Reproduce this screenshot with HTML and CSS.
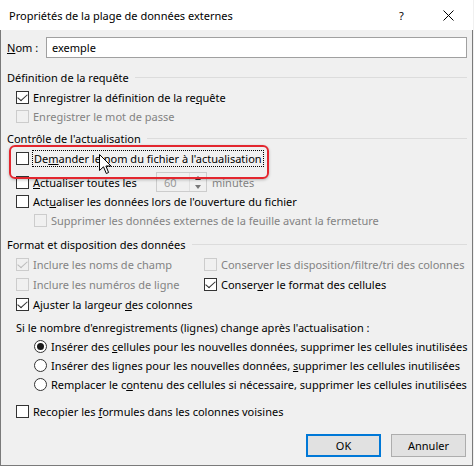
FILE: index.html
```html
<!DOCTYPE html>
<html lang="fr">
<head>
    <meta charset="UTF-8">
    <title>Propriétés de la plage de données externes</title>
    <link rel="stylesheet" href="styles.css">
</head>
<body>
    <div class="dialog">
        <div class="titlebar">
            <span class="title">Propriétés de la plage de données externes</span>
            <span class="help">?</span>
            <svg class="close" width="11" height="11" viewBox="0 0 11 11">
                <path d="M0.5 0.5 L10.5 10.5 M10.5 0.5 L0.5 10.5" stroke="#000" stroke-width="1" fill="none"/>
            </svg>
        </div>

        <div class="content">
            <!-- Nom -->
            <div class="name-row">
                <label class="name-label"><u>N</u>om :</label>
                <div class="textbox">exemple</div>
            </div>

            <!-- Définition de la requête -->
            <div class="group-title">Définition de la requête</div>
            <div class="row">
                <span class="box checked"></span>
                <span>Enregistrer la définition de la re<u>q</u>uête</span>
            </div>
            <div class="row disabled">
                <span class="box"></span>
                <span>Enregistrer le mot de passe</span>
            </div>

            <!-- Contrôle de l'actualisation -->
            <div class="group-title second">Contrôle de l'actualisation</div>
            <div class="row first-in-group">
                <span class="box"></span>
                <span class="focus">De<u>m</u>ander le nom du fichier à l'actualisation</span>
            </div>
            <div class="row spin-row">
                <span class="box"></span>
                <span class="spin-label"><u>A</u>ctualiser toutes les</span>
                <div class="spin">
                    <span class="spin-value">60</span>
                    <span class="spin-buttons">
                        <span class="arrow-up"></span>
                        <span class="arrow-down"></span>
                    </span>
                </div>
                <span class="muted">minutes</span>
            </div>
            <div class="row">
                <span class="box"></span>
                <span>Act<u>u</u>aliser les données lors de l'ouverture du fichier</span>
            </div>
            <div class="row disabled indent">
                <span class="box"></span>
                <span>Supprimer les données externes de la feuille avant la fermeture</span>
            </div>

            <!-- Format et disposition des données -->
            <div class="group-title third">Format et disposition des données</div>
            <div class="format-grid">
                <div class="row disabled">
                    <span class="box checked"></span>
                    <span>Inclure les noms de champ</span>
                </div>
                <div class="row disabled">
                    <span class="box"></span>
                    <span>Conserver les disposition/filtre/tri des colonnes</span>
                </div>
                <div class="row disabled">
                    <span class="box"></span>
                    <span>Inclure les numéros de ligne</span>
                </div>
                <div class="row">
                    <span class="box checked"></span>
                    <span>Conser<u>v</u>er le format des cellules</span>
                </div>
                <div class="row">
                    <span class="box checked"></span>
                    <span>Ajuster la largeur <u>d</u>es colonnes</span>
                </div>
            </div>

            <div class="question">Si le nombre d'enregistrements (lignes) change après l'actualisation :</div>
            <div class="row radio-row">
                <span class="radio selected"></span>
                <span>Insérer des <u>c</u>ellules pour les nouvelles données, supprimer les cellules inutilisées</span>
            </div>
            <div class="row radio-row">
                <span class="radio"></span>
                <span>Insérer des lignes pour les nouvelles données, <u>s</u>upprimer les cellules inutilisées</span>
            </div>
            <div class="row radio-row">
                <span class="radio"></span>
                <span>Remplacer le c<u>o</u>ntenu des cellules si nécessaire, supprimer les cellules inutilisées</span>
            </div>

            <div class="row copy-row">
                <span class="box"></span>
                <span>Recopier les <u>f</u>ormules dans les colonnes voisines</span>
            </div>

            <div class="buttons">
                <button class="btn default">OK</button>
                <button class="btn">Annuler</button>
            </div>
        </div>

        <!-- annotation drawn over the dialog -->
        <div class="highlight"></div>
        <svg class="cursor" width="14" height="21" viewBox="0 0 14 21">
            <path d="M0.5 0.5 L0.5 16.5 L4.5 12.8 L7.3 19.5 L9.6 18.5 L6.9 12 L12 12 Z" fill="#fff" stroke="#000" stroke-width="1" stroke-linejoin="miter"/>
        </svg>
    </div>
</body>
</html>
```

FILE: styles.css
```css
body {
    margin: 0;
    background: #f0f0f0;
    font-family: "Noto Sans", sans-serif;
    font-size: 11px;
    color: #000;
}
.dialog {
    position: relative;
    width: 473px;
    height: 466px;
    display: flex;
    flex-direction: column;
}
.titlebar {
    height: 30px;
    background: #fff;
    display: flex;
    align-items: center;
    padding-left: 9px;
    flex-shrink: 0;
}
.title {
    flex: 1;
}
.help {
    width: 10px;
    margin-right: 34px;
}
.close {
    margin-right: 19px;
}
.content {
    flex: 1;
    display: flex;
    flex-direction: column;
    background: #f0f0f0;
    border: 1px solid #7a7a7a;
    border-top: 0;
    padding: 7px 5px 0 6px;
}
.name-row {
    display: flex;
    align-items: center;
    height: 21px;
}
.name-label {
    width: 39px;
}
.textbox {
    flex: 1;
    height: 21px;
    box-sizing: border-box;
    background: #fff;
    border: 1px solid #a0a0a0;
    padding-left: 5px;
    line-height: 19px;
}
.group-title {
    display: flex;
    align-items: center;
    gap: 6px;
    height: 18px;
    margin-top: 10px;
}
.group-title::after {
    content: "";
    flex: 1;
    height: 1px;
    background: #dcdcdc;
}
.group-title.second {
    margin-top: 3px;
}
.group-title.third {
    margin-top: 5px;
}
.row {
    display: flex;
    align-items: center;
    gap: 4px;
    height: 19px;
    padding-left: 9px;
    white-space: nowrap;
}
.group-title + .row {
    margin-top: 2px;
}
.row.indent {
    padding-left: 27px;
}
.row.disabled {
    color: #838383;
}
.box {
    width: 13px;
    height: 13px;
    box-sizing: border-box;
    border: 1px solid #333;
    background: #fff;
    flex-shrink: 0;
    position: relative;
}
.disabled .box {
    border-color: #cccccc;
    background: #f0f0f0;
}
.box.checked::after {
    content: "";
    position: absolute;
    left: 3px;
    top: 0px;
    width: 4px;
    height: 8px;
    border: solid #333;
    border-width: 0 1px 1px 0;
    transform: rotate(40deg) skewX(-8deg);
}
.disabled .box.checked::after {
    border-color: #bcbcbc;
}
.focus {
    outline: 1px dotted #000;
    outline-offset: 0;
    padding: 0 1px;
    line-height: 15px;
}
.spin-row {
    height: 20px;
    margin-top: 4px;
}
.spin-label {
    width: 119px;
}
.spin {
    width: 51px;
    height: 20px;
    box-sizing: border-box;
    border: 1px solid #cccccc;
    background: #f0f0f0;
    display: flex;
    align-items: center;
    margin-right: 1px;
}
.spin-value {
    flex: 1;
    padding-left: 7px;
    color: #9a9a9a;
}
.spin-buttons {
    width: 15px;
    height: 18px;
    display: flex;
    flex-direction: column;
    justify-content: space-around;
    align-items: center;
    border-left: 1px solid #e0e0e0;
    margin-right: 1px;
}
.arrow-up {
    width: 0;
    height: 0;
    border-left: 3px solid transparent;
    border-right: 3px solid transparent;
    border-bottom: 4px solid #333;
}
.arrow-down {
    width: 0;
    height: 0;
    border-left: 3px solid transparent;
    border-right: 3px solid transparent;
    border-top: 4px solid #777;
}
.muted {
    color: #838383;
}
.format-grid {
    display: grid;
    grid-template-columns: 197px 1fr;
    margin-top: 1px;
}
.format-grid .row {
    height: 20px;
}
.format-grid .row:nth-child(even) {
    padding-left: 0;
}
.question {
    height: 18px;
    line-height: 18px;
    margin-top: 5px;
    padding-left: 9px;
    white-space: nowrap;
}
.radio-row {
    padding-left: 27px;
}
.radio {
    width: 13px;
    height: 13px;
    box-sizing: border-box;
    border: 1px solid #333;
    border-radius: 50%;
    background: #fff;
    flex-shrink: 0;
    display: flex;
    align-items: center;
    justify-content: center;
}
.radio.selected::after {
    content: "";
    width: 7px;
    height: 7px;
    border-radius: 50%;
    background: #1a1a1a;
}
.copy-row {
    margin-top: 8px;
}
.buttons {
    display: flex;
    justify-content: flex-end;
    gap: 10px;
    margin-top: 13px;
    margin-right: 1px;
}
.btn {
    width: 75px;
    height: 23px;
    box-sizing: border-box;
    background: #e1e1e1;
    border: 1px solid #adadad;
    font-family: inherit;
    font-size: 11px;
    color: #000;
    padding: 0;
}
.btn.default {
    border: 2px solid #0078d7;
}
.highlight {
    position: absolute;
    left: 9px;
    top: 145px;
    width: 260px;
    height: 34px;
    box-sizing: border-box;
    border: 2px solid #e3262e;
    border-radius: 6px;
    box-shadow: 0 1px 3px rgba(0, 0, 0, 0.25);
}
.cursor {
    position: absolute;
    left: 99px;
    top: 154px;
}
```
